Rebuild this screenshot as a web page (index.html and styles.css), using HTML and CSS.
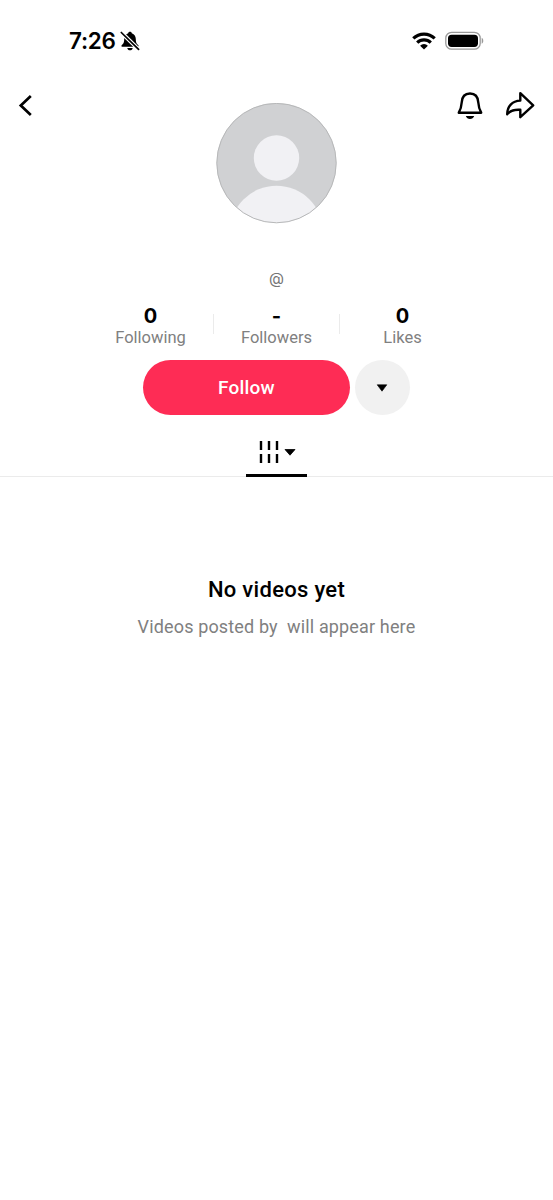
FILE: index.html
```html
<!DOCTYPE html>
<html lang="en">
<head>
<meta charset="utf-8">
<title>Profile</title>
<link rel="stylesheet" href="styles.css">
</head>
<body>
<header class="status">
  <div class="clock"><span class="time">7:26</span>
    <svg class="muted" width="20" height="20" viewBox="0 0 20 20"><path d="M10 .8c-1 0-1.700.6-1.800 1.400C5.500 3.200 4.200 5.300 4.200 8c0 4-1.200 5-2.500 6.300-.6.700-.4 1.500.5 1.500h15.600c.9 0 1.100-.8.5-1.500C17 13 15.800 12 15.800 8c0-2.700-1.300-4.800-4-5.800C11.700 1.400 11 .8 10 .8zM7.300 16.900h5.400c-.2 1.400-1.300 2.300-2.700 2.300s-2.500-.9-2.700-2.300z"/><path d="M1.300 1.500 18.600 18.400" stroke="#fff" stroke-width="4"/><path d="M1.300 1.500 18.600 18.400" stroke="#000" stroke-width="1.700" stroke-linecap="round"/></svg>
  </div>
  <div class="signals">
    <svg class="wifi" width="24" height="18" viewBox="0 0 24 18"><g fill="none" stroke="#000" stroke-width="3.200"><path d="M1.300 6.400a15.400 15.400 0 0 1 21.400 0"/><path d="M5.200 10.600a9.800 9.800 0 0 1 13.600 0"/></g><path d="M12 17.600 8.100 13.700a5.600 5.600 0 0 1 7.800 0z"/></svg>
    <svg class="battery" width="39" height="20" viewBox="0 0 39 20"><rect x=".8" y="1.300" width="34.400" height="16.900" rx="5.800" fill="none" stroke="#999" stroke-width="1.300"/><rect x="3" y="3.700" width="30" height="12.200" rx="3.600"/><path d="M36.700 6.800c2.100.9 2.100 5 0 5.900z" fill="#999"/></svg>
  </div>
</header>
<main>
  <section class="top">
    <svg class="back" width="20" height="28" viewBox="0 0 20 28"><path d="M14.800 4.100 4.800 13.500l10 9.400" fill="none" stroke="#000" stroke-width="2.700"/></svg>
    <svg class="avatar" width="121" height="121" viewBox="0 0 121 121"><defs><clipPath id="disc"><circle cx="60.500" cy="60" r="60"/></clipPath></defs><circle cx="60.500" cy="60" r="59.900" fill="#d0d1d3"/><g fill="#f1f1f4" clip-path="url(#disc)"><circle cx="60.500" cy="55" r="22.700"/><circle cx="60.500" cy="129.500" r="46.700"/></g><circle cx="60.500" cy="60.100" r="59.700" fill="none" stroke="#b7b8b9"/></svg>
    <div class="actions">
      <svg width="28" height="30" viewBox="0 0 28 30"><path d="M2.800 22.700c1.800-3.100 2.600-5.700 2.900-10.200.3-5.400 3.200-9 8.300-9s8 3.600 8.300 9c.3 4.500 1.100 7.100 2.900 10.200z" fill="none" stroke="#000" stroke-width="2.400" stroke-linejoin="round"/><path d="M9.800 26.100h8.400c-.7 1.900-2.200 3-4.200 3s-3.500-1.100-4.200-3z"/></svg>
      <svg width="30" height="30" viewBox="0 0 30 30"><path d="M15.300 3.200 28.200 15.300 15.300 27.200v-7.400C9.500 19.300 5.400 20.500 2.200 24.300 2.200 16.400 7.200 10.900 15.300 10.600z" fill="none" stroke="#000" stroke-width="2.400" stroke-linejoin="round"/></svg>
    </div>
  </section>
  <div class="handle">@</div>
  <section class="stats">
    <div class="stat"><b>0</b><span>Following</span></div>
    <div class="stat"><b>-</b><span>Followers</span></div>
    <div class="stat"><b>0</b><span>Likes</span></div>
  </section>
  <div class="buttons">
    <button class="follow">Follow</button>
    <button class="more" aria-label="More"><svg width="12" height="8" viewBox="0 0 12 8"><path d="M1.200.8h9.600L6 7.200z" stroke="#000" stroke-width=".6" stroke-linejoin="round"/></svg></button>
  </div>
  <nav class="tabs">
    <div class="tab">
      <svg width="20" height="24" viewBox="0 0 20 24"><path d="M2 1v9M10 1v9M18 1v9M2 14v9M10 14v9M18 14v9" stroke="#000" stroke-width="2.400"/></svg>
      <svg class="caret" width="12" height="8" viewBox="0 0 12 8"><path d="M1 1.500h10L6 7.200z" stroke="#000" stroke-width=".8" stroke-linejoin="round"/></svg>
    </div>
  </nav>
  <section class="empty">
    <h1>No videos yet</h1>
    <p>Videos posted by&nbsp; will appear here</p>
  </section>
</main>
</body>
</html>
```
FILE: styles.css
```css
* { box-sizing: border-box; }
body { margin: 0; background: #fff; color: #000; font-family: Roboto, "Liberation Sans", sans-serif; }
svg { display: block; flex: none; }
.status { height: 82px; padding: 0 69px; display: flex; justify-content: space-between; align-items: center; }
.clock { display: flex; align-items: center; gap: 4px; }
.time { font: 600 22.5px/28px Inter, sans-serif; letter-spacing: -.3px; }
.signals { display: flex; align-items: center; gap: 9px; }
.top { height: 142px; padding: 0 18px 0 16px; display: grid; grid-template-columns: 200px 121px 1fr; align-items: start; }
.back { margin-top: 10px; }
.avatar { margin-top: 21px; }
.actions { display: flex; justify-content: flex-end; gap: 21px; margin-top: 8px; }
.handle { margin-top: 44px; height: 22px; font: 15.5px/22px Inter, sans-serif; text-align: center; color: #757575; }
.stats { width: 378px; margin: 14px 0 0 87px; display: grid; grid-template-columns: repeat(3, 126px); }
.stat { position: relative; display: flex; flex-direction: column; align-items: center; padding-left: 1px; }
.stat + .stat::before { content: ""; position: absolute; left: 0; top: 10px; width: 1px; height: 20px; background: #ebebeb; }
.stat b { font: 700 20px/24px Inter, sans-serif; }
.stat span { font-size: 16.5px; line-height: 20px; color: #808080; }
.buttons { display: flex; justify-content: center; gap: 5px; margin-top: 12px; }
button { border: 0; padding: 0; font-family: inherit; }
.follow { width: 207px; height: 55px; border-radius: 28px; background: #fe2c55; color: #fff; font-size: 19px; font-weight: 500; letter-spacing: .2px; }
.more { width: 55px; height: 55px; border-radius: 50%; background: #f1f1f1; display: flex; align-items: center; justify-content: center; }
.more svg { margin-right: 1px; }
.tabs { margin-top: 15px; height: 47px; border-bottom: 1px solid #ebebeb; display: flex; justify-content: center; }
.tab { width: 61px; height: 47px; border-bottom: 3px solid #000; display: flex; justify-content: center; gap: 5px; padding: 10px 0 0 2px; }
.caret { margin-top: 8px; }
.empty { padding-top: 99px; text-align: center; }
h1 { margin: 0; font-size: 22px; line-height: 28px; font-weight: 500; letter-spacing: .3px; }
p { margin: 11px 0 0; font-size: 18px; line-height: 24px; letter-spacing: .15px; color: #808080; }
```
